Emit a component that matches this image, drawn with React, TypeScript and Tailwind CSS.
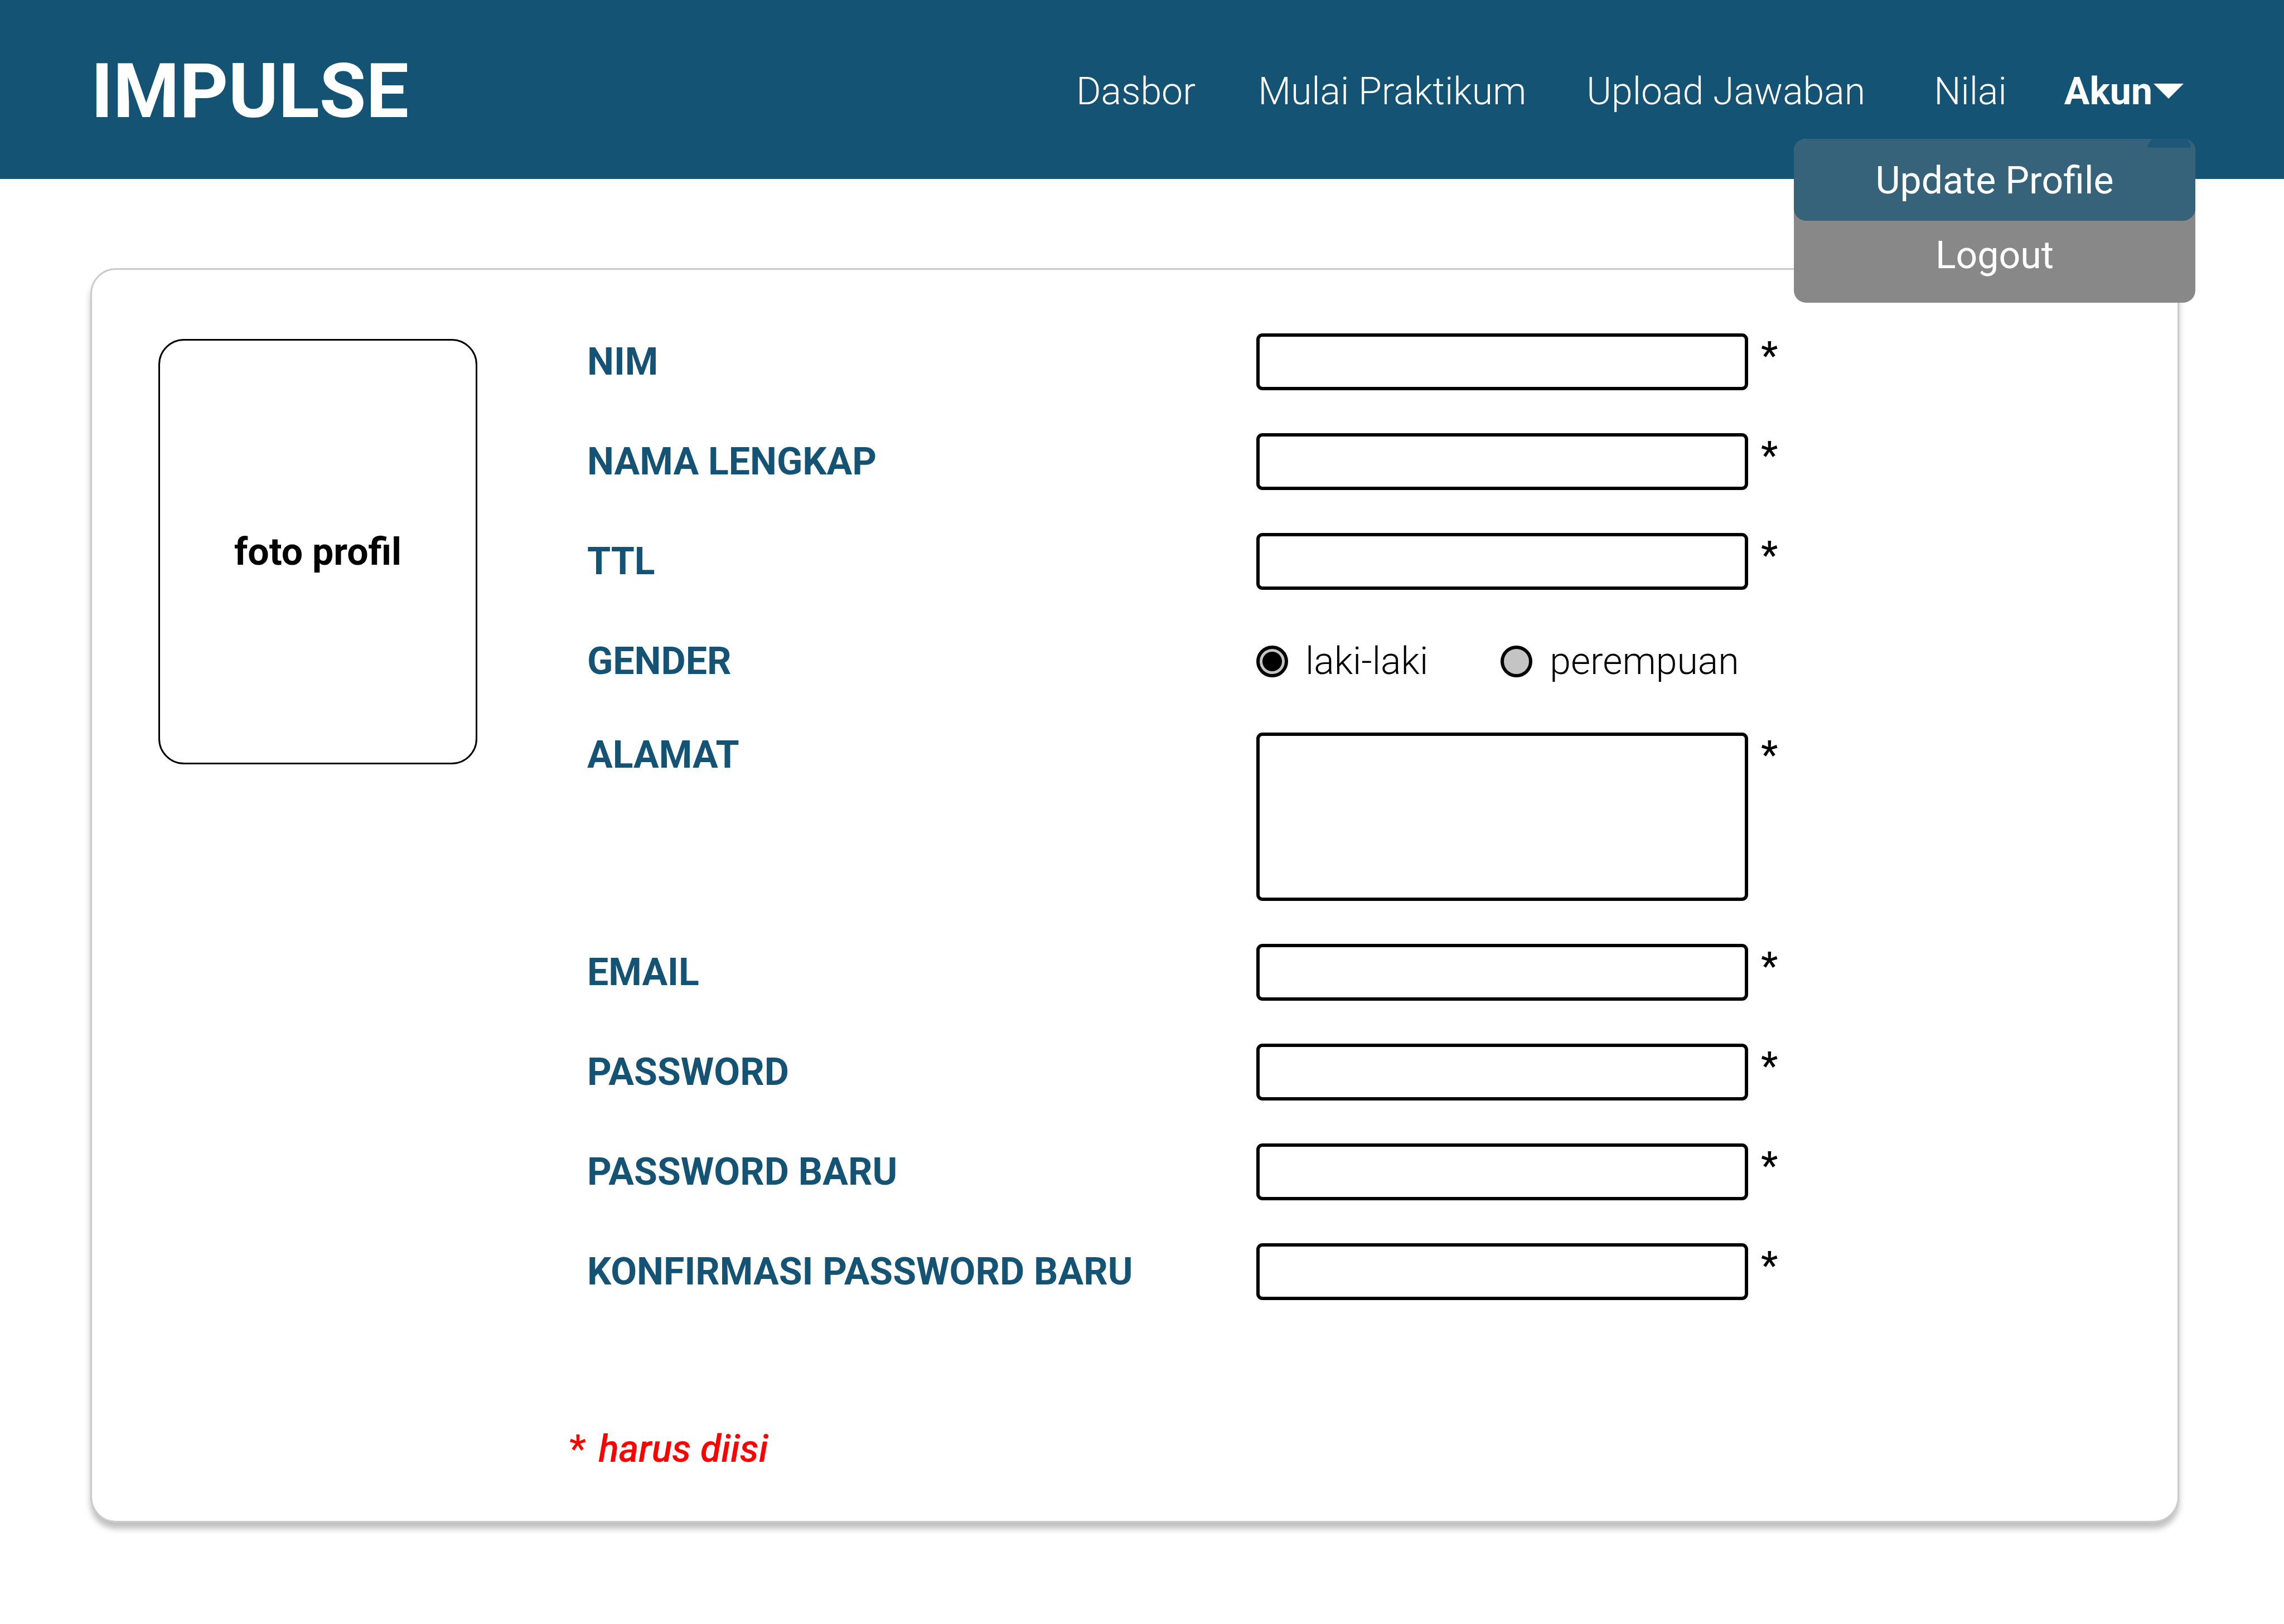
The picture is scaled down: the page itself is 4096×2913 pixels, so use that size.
import React from "react";

const label = "text-[68px] leading-[80px] font-bold text-[#145374]";
const box = "block w-[882px] rounded-[11px] border-[6px] border-black bg-white px-6 text-[56px] text-black outline-none";

function Star() {
  return <span aria-hidden="true" className="ml-[23px] text-[68px] leading-[80px] font-medium">*</span>;
}

function Field({ id, text, type = "text" }: { id: string; text: string; type?: string }) {
  return (
    <div className="flex items-start">
      <label htmlFor={id} className={`${label} w-[1200px] shrink-0 py-[11px]`}>{text}</label>
      <input id={id} name={id} type={type} required className={`${box} h-[102px]`} />
      <Star />
    </div>
  );
}

function Radio({ value, checked = false }: { value: string; checked?: boolean }) {
  return (
    <label className="flex items-center gap-[31px]">
      <input
        type="radio"
        name="gender"
        value={value}
        defaultChecked={checked}
        className="size-[57px] shrink-0 appearance-none rounded-full border-[6px] border-black bg-[#c4c4c4] checked:bg-[radial-gradient(circle,#000_0_17px,#c4c4c4_18px)]"
      />
      <span className="text-[68px] leading-[80px] font-light">{value}</span>
    </label>
  );
}

function AccountMenu() {
  return (
    <div className="absolute top-[249px] right-[159px] w-[720px] overflow-hidden rounded-[22px] bg-[#888888] text-center text-[68px] leading-[80px]">
      <a href="#profile" className="relative block rounded-[22px] bg-[#37637a] pt-[35px] pb-[32px]">
        Update Profile
        <svg viewBox="0 0 78 16" className="absolute top-0 right-[8px] h-[16px] w-[78px]" aria-hidden="true">
          <path d="M8 0H71L77.500 11Q79 16 74 16H4Q-1 16 1 11Z" fill="#1e5777" />
        </svg>
      </a>
      <a href="#logout" className="block pt-[22px] pb-[45px]">Logout</a>
    </div>
  );
}

export default function App() {
  return (
    <div className="relative min-h-screen bg-white font-['Roboto',sans-serif] text-black">
      <header className="relative z-10 bg-[#145374] text-white">
        <div className="flex h-[321px] items-center justify-between pt-1.5 pr-[180px] pl-[163px]">
          <h1 className="text-[136px] leading-none font-bold">IMPULSE</h1>
          <nav className="flex items-center text-[68px] leading-[80px] font-light">
            <a href="#dasbor" className="mr-[112px]">Dasbor</a>
            <a href="#praktikum" className="mr-[108px]">Mulai Praktikum</a>
            <a href="#jawaban" className="mr-[123px]">Upload Jawaban</a>
            <a href="#nilai" className="mr-[103px]">Nilai</a>
            <button type="button" aria-haspopup="true" aria-expanded="true" className="flex items-center gap-0.5 font-bold">
              Akun
              <svg viewBox="0 0 54 27" className="h-[27px] w-[54px]" fill="currentColor" aria-hidden="true">
                <path d="M0 0H54L27 27Z" />
              </svg>
            </button>
          </nav>
        </div>
        <AccountMenu />
      </header>

      <main className="pt-[160px] pr-[188px] pb-[182px] pl-[162px]">
        <div className="flex items-start rounded-[46px] border-[3px] border-[#cbcbcb] bg-white pt-[114px] pb-[89px] pl-[119px] shadow-[0_11px_11px_rgba(0,0,0,0.25)]">
          <div className="mt-[10px] flex h-[763px] w-[572px] shrink-0 items-center justify-center rounded-[46px] border-[3px] border-black text-[68px] leading-[80px] font-bold">
            foto profil
          </div>
          <form className="flex flex-1 flex-col gap-[77px] pl-[197px]">
            <Field id="nim" text="NIM" />
            <Field id="nama" text="NAMA LENGKAP" />
            <Field id="ttl" text="TTL" />
            <div role="radiogroup" aria-labelledby="gender" className="flex h-[102px] items-center">
              <span id="gender" className={`${label} w-[1200px] shrink-0`}>GENDER</span>
              <div className="flex gap-[130px]">
                <Radio value="laki-laki" checked />
                <Radio value="perempuan" />
              </div>
            </div>
            <div className="flex items-start">
              <label htmlFor="alamat" className={`${label} w-[1200px] shrink-0`}>ALAMAT</label>
              <textarea id="alamat" name="alamat" required className={`${box} h-[302px] resize-none`} />
              <Star />
            </div>
            <Field id="email" text="EMAIL" type="email" />
            <Field id="password" text="PASSWORD" type="password" />
            <Field id="password-baru" text="PASSWORD BARU" type="password" />
            <Field id="konfirmasi" text="KONFIRMASI PASSWORD BARU" type="password" />
            <p className="mt-[150px] -ml-8 flex gap-[22px] text-[68px] leading-[80px] font-medium text-[#ff0000]">
              <span>*</span>
              <em>harus diisi</em>
            </p>
          </form>
        </div>
      </main>
    </div>
  );
}
